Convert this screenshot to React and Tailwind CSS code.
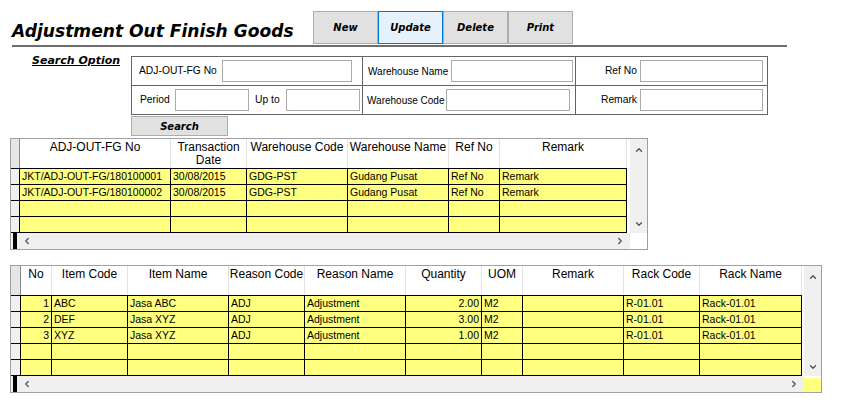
import { ChevronLeft, ChevronRight, ChevronUp, ChevronDown } from 'lucide-react'

const ORDERS_COLS = [
  { label: 'ADJ-OUT-FG No', w: 151 },
  { label: 'Transaction\nDate', w: 76 },
  { label: 'Warehouse Code', w: 101 },
  { label: 'Warehouse Name', w: 101 },
  { label: 'Ref No', w: 51 },
  { label: 'Remark', w: 127 },
]

const ORDERS_ROWS = [
  ['JKT/ADJ-OUT-FG/180100001', '30/08/2015', 'GDG-PST', 'Gudang Pusat', 'Ref No', 'Remark'],
  ['JKT/ADJ-OUT-FG/180100002', '30/08/2015', 'GDG-PST', 'Gudang Pusat', 'Ref No', 'Remark'],
  ['', '', '', '', '', ''],
  ['', '', '', '', '', ''],
]

const ITEM_COLS = [
  { label: 'No', w: 31, right: true },
  { label: 'Item Code', w: 76 },
  { label: 'Item Name', w: 101 },
  { label: 'Reason Code', w: 76 },
  { label: 'Reason Name', w: 101 },
  { label: 'Quantity', w: 76, right: true },
  { label: 'UOM', w: 41 },
  { label: 'Remark', w: 101 },
  { label: 'Rack Code', w: 76 },
  { label: 'Rack Name', w: 102 },
]

const ITEM_ROWS = [
  ['1', 'ABC', 'Jasa ABC', 'ADJ', 'Adjustment', '2.00', 'M2', '', 'R-01.01', 'Rack-01.01'],
  ['2', 'DEF', 'Jasa XYZ', 'ADJ', 'Adjustment', '3.00', 'M2', '', 'R-01.01', 'Rack-01.01'],
  ['3', 'XYZ', 'Jasa XYZ', 'ADJ', 'Adjustment', '1.00', 'M2', '', 'R-01.01', 'Rack-01.01'],
  ['', '', '', '', '', '', '', '', '', ''],
  ['', '', '', '', '', '', '', '', '', ''],
]

const VERDANA = { fontFamily: '"DejaVu Sans", Verdana, sans-serif' }

function Field({ w }) {
  return <div className="h-[22px] border border-[#ababab] bg-white shrink-0" style={{ width: w }} />
}

function ToolButton({ label, active }) {
  return (
    <div
      className={`w-[65px] h-[33px] flex items-center justify-center border text-[10px] font-bold italic
                  ${active ? 'bg-[#e5f1fb] border-[#0078d7]' : 'bg-[#e1e1e1] border-[#adadad]'}`}
      style={VERDANA}
    >
      {label}
    </div>
  )
}

function DataGrid({ cols, rows, headW, gap, corner }) {
  return (
    <div className="flex flex-col border border-[#a0a0a0] ml-[10px] self-start bg-white">
      <div className="flex">
        <div className="flex flex-col" style={{ paddingRight: gap }}>
          {/* header */}
          <div className="flex h-[29px]">
            <div className="bg-[#e6e6e6] border-r border-[#8a8a8a] shrink-0" style={{ width: headW }} />
            {cols.map(c => (
              <div
                key={c.label}
                className="bg-white border-r border-[#e3e3e3] text-[12px] leading-[13px] text-center pt-[2px] shrink-0"
                style={{ width: c.w }}
              >
                <span className="whitespace-pre">{c.label}</span>
              </div>
            ))}
          </div>
          {/* rows */}
          <div className="flex flex-col border-t border-black">
            {rows.map((r, i) => (
              <div key={i} className="flex h-[16px]">
                <div className="bg-[#f0f0f0] border-r border-b border-black shrink-0" style={{ width: headW }} />
                {r.map((v, j) => (
                  <div
                    key={j}
                    className={`bg-[#ffff80] border-r border-b border-black text-[10.5px] leading-[15px] px-[2px]
                                whitespace-nowrap overflow-hidden shrink-0 ${cols[j].right ? 'text-right' : ''}`}
                    style={{ width: cols[j].w }}
                  >
                    {v}
                  </div>
                ))}
              </div>
            ))}
          </div>
        </div>
        {/* vertical scrollbar */}
        <div className="w-[17px] bg-[#f0f0f0] flex flex-col items-center justify-between pt-[6px] pb-[4px]">
          <ChevronUp size={10} strokeWidth={3} className="text-[#505050]" />
          <ChevronDown size={10} strokeWidth={3} className="text-[#505050]" />
        </div>
      </div>
      {/* horizontal scrollbar */}
      <div className="flex h-[16px]">
        <div className="flex-1 bg-[#f0f0f0] flex items-center">
          <div className="w-[4px] h-full bg-black ml-[2px]" />
          <ChevronLeft size={10} strokeWidth={3} className="text-[#505050] ml-[5px]" />
          <ChevronRight size={10} strokeWidth={3} className="text-[#505050] ml-auto mr-[5px]" />
        </div>
        <div className={`w-[17px] ${corner ? 'bg-[#ffff80] mt-[2px]' : 'bg-white'}`} />
      </div>
    </div>
  )
}

export default function App() {
  return (
    <div
      className="w-[850px] h-[400px] bg-white text-black flex flex-col overflow-hidden"
      style={{ fontFamily: '"Liberation Sans", Arial, sans-serif' }}
    >
      {/* title bar */}
      <div className="flex h-[45px] pt-[11px]">
        <div
          className="w-[313px] pl-[12px] pt-[10px] text-[17.1px] leading-[20px] font-bold italic whitespace-nowrap"
          style={VERDANA}
        >
          Adjustment Out Finish Goods
        </div>
        <div className="flex">
          <ToolButton label="New" />
          <ToolButton label="Update" active />
          <ToolButton label="Delete" />
          <ToolButton label="Print" />
        </div>
      </div>
      <div className="ml-[12px] w-[775px] h-[2px] bg-[#6d6d6d]" />

      {/* search option */}
      <div className="flex mt-[9px]">
        <div className="w-[131px] pl-[32px] -mt-[2px] text-[11px] leading-[14px] font-bold italic underline" style={VERDANA}>
          Search Option
        </div>
        <div className="w-[637px] border border-[#646464] flex flex-col text-[10.3px] whitespace-nowrap">
          <div className="flex h-[29px] border-b border-[#646464]">
            <div className="w-[231px] border-r border-[#646464] flex items-center justify-between pl-[7px] pr-[10px]">
              <span>ADJ-OUT-FG No</span>
              <Field w={130} />
            </div>
            <div className="w-[213px] border-r border-[#646464] flex items-center pl-[5px]">
              <span className="w-[83px] text-[10px]">Warehouse Name</span>
              <Field w={122} />
            </div>
            <div className="flex-1 flex items-center">
              <span className="w-[62px] text-right pr-[1px]">Ref No</span>
              <div className="ml-[2px]"><Field w={123} /></div>
            </div>
          </div>
          <div className="flex h-[28px]">
            <div className="w-[231px] border-r border-[#646464] flex items-center pl-[8px]">
              <span className="w-[35px]">Period</span>
              <Field w={74} />
              <span className="w-[31px] ml-[6px]">Up to</span>
              <Field w={74} />
            </div>
            <div className="w-[213px] border-r border-[#646464] flex items-center pl-[4px]">
              <span className="w-[79px] text-[10px]">Warehouse Code</span>
              <Field w={124} />
            </div>
            <div className="flex-1 flex items-center">
              <span className="w-[62px] text-right pr-[1px]">Remark</span>
              <div className="ml-[2px]"><Field w={123} /></div>
            </div>
          </div>
        </div>
      </div>

      <div
        className="ml-[131px] mt-[1px] w-[97px] h-[20px] bg-[#e1e1e1] border border-[#adadad] flex items-center justify-center
                   text-[10px] font-bold italic"
        style={VERDANA}
      >
        Search
      </div>

      {/* adjustment list */}
      <div className="mt-[2px] flex">
        <DataGrid cols={ORDERS_COLS} rows={ORDERS_ROWS} headW={9} gap={3} />
      </div>

      {/* item detail */}
      <div className="mt-[15px] flex">
        <DataGrid cols={ITEM_COLS} rows={ITEM_ROWS} headW={10} gap={2} corner />
      </div>
    </div>
  )
}
